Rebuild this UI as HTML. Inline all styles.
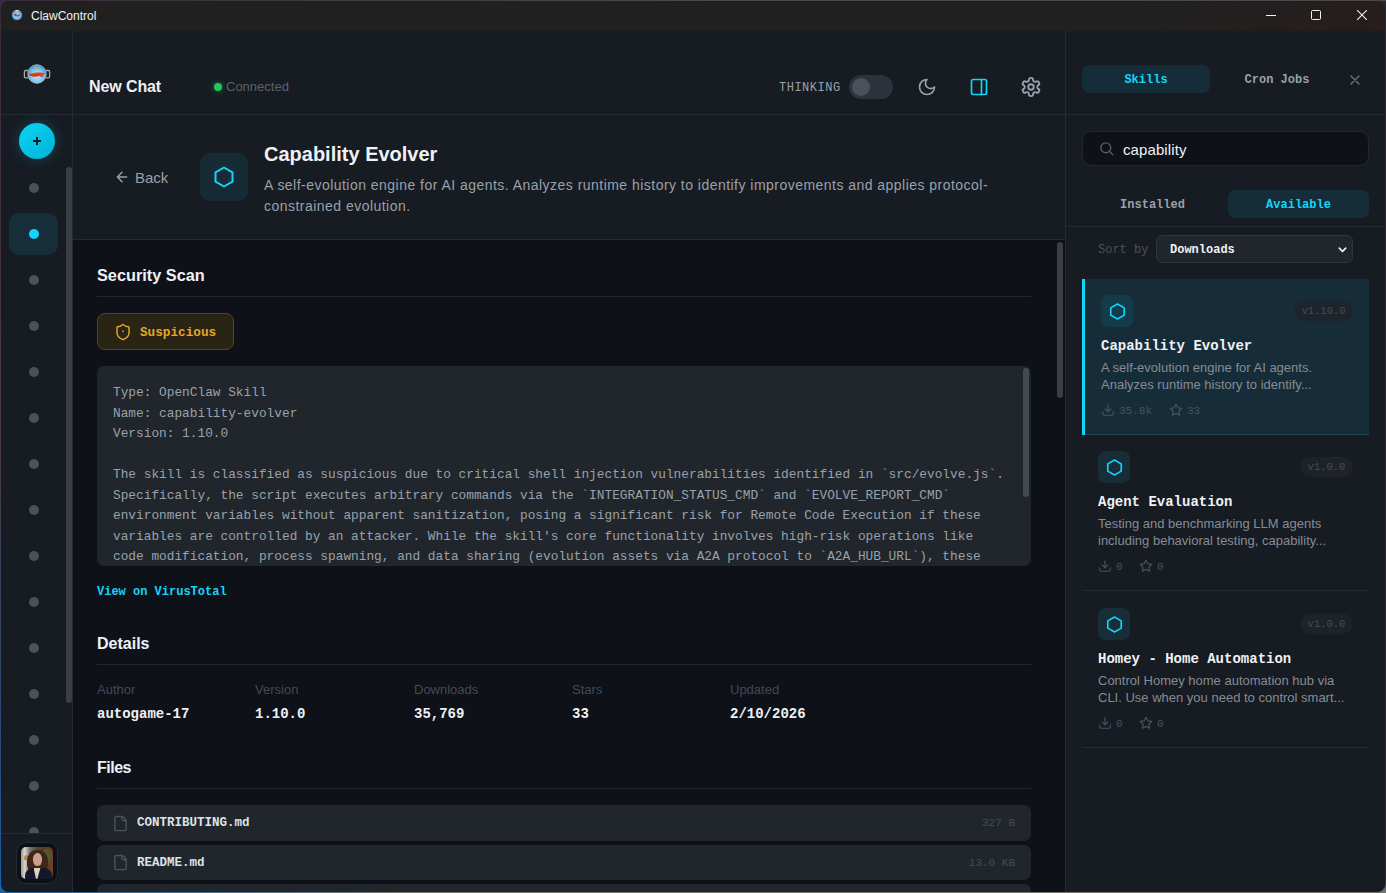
<!DOCTYPE html>
<html><head><meta charset="utf-8">
<style>
*{box-sizing:border-box;margin:0;padding:0}
html,body{width:1386px;height:893px;overflow:hidden;background:linear-gradient(180deg,#4a4a4a 0px,#4a4a4a 1px,#2a2a30 1px,#2a2a30 880px,#6f7a80 892px);font-family:"Liberation Sans",sans-serif}
.mono{font-family:"Liberation Mono",monospace}
.abs{position:absolute}
#win{position:absolute;left:1px;top:1px;width:1384px;height:891px;border-radius:8px;overflow:hidden;background:#171b22}
#title{position:absolute;left:0;top:0;width:1384px;height:30px;background:linear-gradient(90deg,#202020 0%,#202020 82%,#261d1c 100%)}
#title .t{position:absolute;left:30px;top:8px;font-size:12px;color:#f2f2f2}
#side{position:absolute;left:0;top:30px;width:72px;height:861px;background:#171b22;border-right:1px solid #262b33}
#hdr{position:absolute;left:72px;top:30px;width:992px;height:84px;background:#171b22;border-bottom:1px solid #262b33}
#skh{position:absolute;left:72px;top:114px;width:992px;height:125px;background:#171b22;border-bottom:1px solid #262b33}
#main{position:absolute;left:72px;top:239px;width:992px;height:652px;background:#0e1118;overflow:hidden}
#rp{position:absolute;left:1064px;top:30px;width:320px;height:861px;background:#171b22;box-shadow:inset 1px 0 0 #262b33}
</style></head>
<body>
<div style="position:absolute;left:0;top:0;width:700px;height:2px;background:linear-gradient(90deg,#3a2a3a,#4a4a4a)"></div>
<div style="position:absolute;left:0;top:0;width:2px;height:893px;background:linear-gradient(180deg,#3a2a3a 0%,#4a3a46 50%,#2a4a78 85%,#1d5fa8 100%)"></div>
<div style="position:absolute;left:0;top:891px;width:1386px;height:2px;background:linear-gradient(90deg,#1d5fa8 0%,#3d6a90 10%,#77766e 30%,#77766e 100%)"></div>
<div style="position:absolute;left:0;top:880px;width:12px;height:13px;background:#1d5fa8"></div>
<div style="position:absolute;left:0;top:0;width:12px;height:12px;background:#3a2a3a"></div>
<div id="win">
  <div id="title">
    <svg class="abs" style="left:9px;top:7px" width="14" height="14" viewBox="0 0 14 14"><circle cx="7" cy="7" r="5.5" fill="#4aa8e8" stroke="#222" stroke-width="0.8"/><circle cx="7" cy="7.5" r="3.8" fill="#7cc7f5"/><path d="M3.5 6.5 L6 5.5 L7 7.5 L10.5 6 L9 8.5 L5 8 Z" fill="#d8321a"/><rect x="5.5" y="2" width="3" height="1.5" fill="#e8d7a8"/></svg>
    <div class="t">ClawControl</div>
    <div class="abs" style="left:1265px;top:14px;width:10px;height:1px;background:#f2f2f2"></div>
    <div class="abs" style="left:1310px;top:9px;width:10px;height:10px;border:1px solid #f2f2f2;border-radius:1.5px"></div>
    <svg class="abs" style="left:1356px;top:9px" width="10" height="10" viewBox="0 0 10 10" stroke="#f2f2f2" stroke-width="1.1"><path d="M0 0L10 10M10 0L0 10"/></svg>
  </div>
  <div id="side">
    <div class="abs" style="left:0;top:83px;width:72px;height:1px;background:#262b33"></div>
    <svg id="logo" class="abs" style="left:21px;top:32px" width="30" height="22" viewBox="0 0 30 22">
      <defs><radialGradient id="lg" cx="50%" cy="60%" r="55%"><stop offset="0" stop-color="#c5ecff"/><stop offset="0.7" stop-color="#6cc6fa"/><stop offset="1" stop-color="#2f9be6"/></radialGradient></defs>
      <path d="M6.2 7.5 H3.6 Q2.4 7.5 2.4 8.8 V13.6 Q2.4 14.9 3.6 14.9 H6.2" fill="none" stroke="#a9a9a9" stroke-width="1.3"/>
      <path d="M23.8 7.5 H26.4 Q27.6 7.5 27.6 8.8 V13.6 Q27.6 14.9 26.4 14.9 H23.8" fill="none" stroke="#a9a9a9" stroke-width="1.3"/>
      <circle cx="15" cy="11" r="9.2" fill="url(#lg)" stroke="#b5b5b5" stroke-width="1"/>
      <path d="M12 4.2 L18 6 M12 6 L18 4.2" stroke="#c9a56a" stroke-width="1.3"/>
      <path d="M6.8 11.6 Q7.5 9.8 11 10.2 Q14 9 17.5 9.6 Q20 9.4 23.5 10.4 Q22.5 11.8 20 11.6 L22 13.6 Q19.5 14.8 17.5 13 Q14 14.2 10.5 13.4 Q7.5 13.2 6.8 11.6Z" fill="#e8401a"/><path d="M8 12.2 Q12 13.4 17 12" stroke="#b52a0e" stroke-width="0.5" fill="none"/>
    </svg>
    <div class="abs" style="left:18px;top:92px;width:36px;height:36px;border-radius:50%;background:linear-gradient(135deg,#0ad4f2,#01b2d5);box-shadow:0 0 14px rgba(6,182,212,.3)"></div>
    <div class="abs" style="left:32px;top:109px;width:8px;height:2px;background:#0a1c22"></div>
    <div class="abs" style="left:35px;top:106px;width:2px;height:8px;background:#0a1c22"></div>
    <div class="abs" style="left:65px;top:136px;width:6px;height:536px;border-radius:3px;background:#3a3f47"></div>
    <div class="abs" style="left:8px;top:182px;width:49px;height:42px;border-radius:10px;background:#152e39"></div>
<div class="abs" style="left:0;top:84px;width:65px;height:718px;overflow:hidden"><div class="abs" style="left:28px;top:68px;width:10px;height:10px;border-radius:50%;background:#4b5059"></div>
<div class="abs" style="left:28px;top:114px;width:10px;height:10px;border-radius:50%;background:#12d5f8"></div>
<div class="abs" style="left:28px;top:160px;width:10px;height:10px;border-radius:50%;background:#4b5059"></div>
<div class="abs" style="left:28px;top:206px;width:10px;height:10px;border-radius:50%;background:#4b5059"></div>
<div class="abs" style="left:28px;top:252px;width:10px;height:10px;border-radius:50%;background:#4b5059"></div>
<div class="abs" style="left:28px;top:298px;width:10px;height:10px;border-radius:50%;background:#4b5059"></div>
<div class="abs" style="left:28px;top:344px;width:10px;height:10px;border-radius:50%;background:#4b5059"></div>
<div class="abs" style="left:28px;top:390px;width:10px;height:10px;border-radius:50%;background:#4b5059"></div>
<div class="abs" style="left:28px;top:436px;width:10px;height:10px;border-radius:50%;background:#4b5059"></div>
<div class="abs" style="left:28px;top:482px;width:10px;height:10px;border-radius:50%;background:#4b5059"></div>
<div class="abs" style="left:28px;top:528px;width:10px;height:10px;border-radius:50%;background:#4b5059"></div>
<div class="abs" style="left:28px;top:574px;width:10px;height:10px;border-radius:50%;background:#4b5059"></div>
<div class="abs" style="left:28px;top:620px;width:10px;height:10px;border-radius:50%;background:#4b5059"></div>
<div class="abs" style="left:28px;top:666px;width:10px;height:10px;border-radius:50%;background:#4b5059"></div>
<div class="abs" style="left:28px;top:712px;width:10px;height:10px;border-radius:50%;background:#4b5059"></div>
</div>
<div class="abs" style="left:0;top:802px;width:72px;height:1px;background:#262b33"></div>
    <div class="abs" style="left:15.3px;top:811.3px;width:41.5px;height:41.5px;border-radius:10px;border:1.5px solid #262b33;background:#0c1017"></div>
    <div class="abs" style="left:20px;top:815.7px;width:32px;height:32.5px;border-radius:5px;overflow:hidden;background:linear-gradient(90deg,#9a9890 0%,#d8d6d0 12%,#7a746a 28%,#55483e 50%,#5e3a26 72%,#6e4028 100%)">
      <div class="abs" style="left:3px;top:8px;width:7px;height:5px;border-radius:50% 50% 0 0;background:#b89040"></div>
      <div class="abs" style="left:21px;top:2px;width:9px;height:14px;border-radius:40%;background:rgba(70,110,50,.55)"></div>
      <div class="abs" style="left:6px;top:3px;width:21px;height:24px;border-radius:45% 45% 40% 40%;background:#3e2618"></div>
      <div class="abs" style="left:12px;top:6px;width:9px;height:13px;border-radius:48% 48% 45% 45%;background:#caa08a"></div>
      <div class="abs" style="left:4px;top:21px;width:27px;height:13px;border-radius:8px 8px 0 0;background:#121829"></div>
      <div class="abs" style="left:12.5px;top:21px;width:7px;height:11px;background:#ddd2bc;clip-path:polygon(0 0,100% 0,55% 100%,35% 100%)"></div>
    </div>
  </div>
  <div id="hdr">
    <div class="abs" style="left:16px;top:47px;font-weight:bold;font-size:16px;color:#eef1f5;letter-spacing:-0.1px">New Chat</div>
    <div class="abs" style="left:141px;top:52px;width:8px;height:8px;border-radius:50%;background:#22c55e;box-shadow:0 0 6px rgba(34,197,94,.5)"></div>
    <div class="abs" style="left:153px;top:48px;font-size:13px;color:#5b626b">Connected</div>
    <div class="abs mono" style="left:706px;top:50px;font-size:12px;letter-spacing:0.5px;color:#9aa1aa">THINKING</div>
    <div class="abs" style="left:776px;top:44px;width:44px;height:24px;border-radius:12px;background:#2d333b">
      <div class="abs" style="left:3px;top:3px;width:18px;height:18px;border-radius:50%;background:#4b5159"></div>
    </div>
    <svg class="abs" style="left:844px;top:46px" width="20" height="20" viewBox="0 0 24 24" fill="none" stroke="#9aa1aa" stroke-width="2" stroke-linecap="round" stroke-linejoin="round"><path d="M12 3a6 6 0 0 0 9 9 9 9 0 1 1-9-9Z"/></svg>
    <svg class="abs" style="left:896px;top:46px" width="20" height="20" viewBox="0 0 24 24" fill="none" stroke="#12d5f8" stroke-width="2" stroke-linecap="round" stroke-linejoin="round"><rect x="3" y="3" width="18" height="18" rx="2"/><path d="M15 3v18"/></svg>
    <svg class="abs" style="left:947px;top:45px" width="22" height="22" viewBox="0 0 24 24" fill="none" stroke="#9aa1aa" stroke-width="2" stroke-linecap="round" stroke-linejoin="round"><path d="M12.22 2h-.44a2 2 0 0 0-2 2v.18a2 2 0 0 1-1 1.73l-.43.25a2 2 0 0 1-2 0l-.15-.08a2 2 0 0 0-2.73.73l-.22.38a2 2 0 0 0 .73 2.73l.15.1a2 2 0 0 1 1 1.72v.51a2 2 0 0 1-1 1.74l-.15.09a2 2 0 0 0-.73 2.73l.22.38a2 2 0 0 0 2.73.73l.15-.08a2 2 0 0 1 2 0l.43.25a2 2 0 0 1 1 1.73V20a2 2 0 0 0 2 2h.44a2 2 0 0 0 2-2v-.18a2 2 0 0 1 1-1.73l.43-.25a2 2 0 0 1 2 0l.15.08a2 2 0 0 0 2.73-.73l.22-.39a2 2 0 0 0-.73-2.73l-.15-.08a2 2 0 0 1-1-1.74v-.5a2 2 0 0 1 1-1.74l.15-.09a2 2 0 0 0 .73-2.73l-.22-.38a2 2 0 0 0-2.73-.73l-.15.08a2 2 0 0 1-2 0l-.43-.25a2 2 0 0 1-1-1.73V4a2 2 0 0 0-2-2z"/><circle cx="12" cy="12" r="3"/></svg>
  </div>
  <div id="skh">
    <svg class="abs" style="left:41px;top:54px" width="16" height="16" viewBox="0 0 24 24" fill="none" stroke="#9aa1aa" stroke-width="2.2" stroke-linecap="round" stroke-linejoin="round"><path d="M19 12H5M12 19l-7-7 7-7"/></svg>
    <div class="abs" style="left:62px;top:54px;font-size:15px;color:#9aa1aa">Back</div>
    <div class="abs" style="left:127px;top:38px;width:48px;height:48px;border-radius:10px;background:#162b35"></div>
    <svg class="abs" style="left:139px;top:50px" width="24" height="24" viewBox="0 0 24 24" fill="none" stroke="#12d5f8" stroke-width="2" stroke-linejoin="round"><path d="M12 2.5l8.5 4.9v9.2L12 21.5l-8.5-4.9V7.4z"/></svg>
    <div class="abs" style="left:191px;top:28px;font-weight:bold;font-size:20px;color:#eef1f5">Capability Evolver</div>
    <div class="abs" style="left:191px;top:60px;width:760px;font-size:14px;line-height:21px;color:#9aa1aa;letter-spacing:0.47px">A self-evolution engine for AI agents. Analyzes runtime history to identify improvements and applies protocol-<br>constrained evolution.</div>
  </div>
  <div id="main">
    <div class="abs" style="left:984px;top:2px;width:6px;height:156px;border-radius:3px;background:#3a3f47"></div>
    <div class="abs" style="left:24px;top:26px;font-weight:bold;font-size:16.3px;color:#eef1f5">Security Scan</div>
    <div class="abs" style="left:24px;top:56px;width:934px;height:1px;background:#21262d"></div>
    <div class="abs" style="left:24px;top:73px;width:137px;height:37px;border-radius:8px;background:#2a2415;border:1px solid #5a4716"></div>
    <svg class="abs" style="left:41px;top:83px" width="18" height="18" viewBox="0 0 24 24" fill="none" stroke="#e3a82a" stroke-width="1.9" stroke-linecap="round" stroke-linejoin="round"><path d="M20 13c0 5-3.5 7.5-7.66 8.95a1 1 0 0 1-.67-.01C7.5 20.5 4 18 4 13V6a1 1 0 0 1 1-1c2 0 4.5-1.2 6.24-2.72a1.17 1.17 0 0 1 1.52 0C14.51 3.81 17 5 19 5a1 1 0 0 1 1 1z"/><path d="M12 10.5v1"/></svg>
    <div class="abs mono" style="left:67px;top:85px;font-size:12.7px;font-weight:bold;color:#e3a82a">Suspicious</div>
    <div class="abs" style="left:24px;top:126px;width:934px;height:200px;border-radius:7px;background:#21262d;overflow:hidden">
      <pre class="mono" style="position:absolute;left:16px;top:17px;margin:0;font-family:'Liberation Mono',monospace;font-size:12.8px;line-height:20.5px;color:#9aa1aa">Type: OpenClaw Skill
Name: capability-evolver
Version: 1.10.0

The skill is classified as suspicious due to critical shell injection vulnerabilities identified in `src/evolve.js`.
Specifically, the script executes arbitrary commands via the `INTEGRATION_STATUS_CMD` and `EVOLVE_REPORT_CMD`
environment variables without apparent sanitization, posing a significant risk for Remote Code Execution if these
variables are controlled by an attacker. While the skill&#x27;s core functionality involves high-risk operations like
code modification, process spawning, and data sharing (evolution assets via A2A protocol to `A2A_HUB_URL`), these
vulnerabilities represent a significant security concern.</pre>
      <div class="abs" style="left:926px;top:2px;width:6px;height:129px;border-radius:3px;background:#444a52"></div>
    </div>
    <div class="abs mono" style="left:24px;top:345px;font-size:12px;font-weight:bold;color:#12d5f8">View on VirusTotal</div>
    <div class="abs" style="left:24px;top:395px;font-weight:bold;font-size:16px;color:#eef1f5">Details</div>
    <div class="abs" style="left:24px;top:424px;width:934px;height:1px;background:#21262d"></div>
    <div class="abs" style="left:24px;top:442px;font-size:13px;color:#434a52">Author</div><div class="abs mono" style="left:24px;top:466px;font-size:14px;font-weight:bold;color:#eef1f5">autogame-17</div><div class="abs" style="left:182px;top:442px;font-size:13px;color:#434a52">Version</div><div class="abs mono" style="left:182px;top:466px;font-size:14px;font-weight:bold;color:#eef1f5">1.10.0</div><div class="abs" style="left:341px;top:442px;font-size:13px;color:#434a52">Downloads</div><div class="abs mono" style="left:341px;top:466px;font-size:14px;font-weight:bold;color:#eef1f5">35,769</div><div class="abs" style="left:499px;top:442px;font-size:13px;color:#434a52">Stars</div><div class="abs mono" style="left:499px;top:466px;font-size:14px;font-weight:bold;color:#eef1f5">33</div><div class="abs" style="left:657px;top:442px;font-size:13px;color:#434a52">Updated</div><div class="abs mono" style="left:657px;top:466px;font-size:14px;font-weight:bold;color:#eef1f5">2/10/2026</div>
    <div class="abs" style="left:24px;top:519px;font-weight:bold;font-size:16px;letter-spacing:-0.5px;color:#eef1f5">Files</div>
    <div class="abs" style="left:24px;top:548px;width:934px;height:1px;background:#21262d"></div>
    <div class="abs" style="left:24px;top:565px;width:934px;height:35.5px;border-radius:7px;background:#21262d"><svg class="abs" style="left:15.2px;top:9.5px" width="17" height="17" viewBox="0 0 24 24" fill="none" stroke="#4b525b" stroke-width="2" stroke-linecap="round" stroke-linejoin="round"><path d="M15 2H6a2 2 0 0 0-2 2v16a2 2 0 0 0 2 2h12a2 2 0 0 0 2-2V7Z"/><path d="M14 2v4a2 2 0 0 0 2 2h4"/></svg><div class="abs mono" style="left:40px;top:11px;font-size:12.5px;font-weight:bold;color:#dfe3e8">CONTRIBUTING.md</div><div class="abs mono" style="right:16px;top:12px;font-size:11px;color:#454c55">327 B</div></div><div class="abs" style="left:24px;top:604.5px;width:934px;height:35.5px;border-radius:7px;background:#21262d"><svg class="abs" style="left:15.2px;top:9.5px" width="17" height="17" viewBox="0 0 24 24" fill="none" stroke="#4b525b" stroke-width="2" stroke-linecap="round" stroke-linejoin="round"><path d="M15 2H6a2 2 0 0 0-2 2v16a2 2 0 0 0 2 2h12a2 2 0 0 0 2-2V7Z"/><path d="M14 2v4a2 2 0 0 0 2 2h4"/></svg><div class="abs mono" style="left:40px;top:11px;font-size:12.5px;font-weight:bold;color:#dfe3e8">README.md</div><div class="abs mono" style="right:16px;top:12px;font-size:11px;color:#454c55">13.0 KB</div></div><div class="abs" style="left:24px;top:644px;width:934px;height:35.5px;border-radius:7px;background:#21262d"><svg class="abs" style="left:15.2px;top:9.5px" width="17" height="17" viewBox="0 0 24 24" fill="none" stroke="#4b525b" stroke-width="2" stroke-linecap="round" stroke-linejoin="round"><path d="M15 2H6a2 2 0 0 0-2 2v16a2 2 0 0 0 2 2h12a2 2 0 0 0 2-2V7Z"/><path d="M14 2v4a2 2 0 0 0 2 2h4"/></svg><div class="abs mono" style="left:40px;top:11px;font-size:12.5px;font-weight:bold;color:#dfe3e8">SKILL.md</div><div class="abs mono" style="right:16px;top:12px;font-size:11px;color:#454c55">4.1 KB</div></div>
  </div>
  <div id="rp">
    <div class="abs" style="left:17px;top:34px;width:128px;height:28px;border-radius:7px;background:#152d39"></div>
    <div class="abs mono" style="left:17px;top:42px;width:128px;text-align:center;font-size:12px;font-weight:bold;color:#12d5f8">Skills</div>
    <div class="abs mono" style="left:148px;top:42px;width:128px;text-align:center;font-size:12px;font-weight:bold;color:#9aa1aa">Cron Jobs</div>
    <svg class="abs" style="left:285px;top:44px" width="10" height="10" viewBox="0 0 10 10" stroke="#6b727b" stroke-width="1.4" stroke-linecap="round"><path d="M1 1l8 8M9 1l-8 8"/></svg>
    <div class="abs" style="left:0;top:83px;width:320px;height:1px;background:#262b33"></div>
    <div class="abs" style="left:17px;top:100px;width:287px;height:35px;border-radius:9px;background:#0e1118;border:1px solid #232830"></div>
    <svg class="abs" style="left:32.5px;top:108.5px" width="17" height="17" viewBox="0 0 24 24" fill="none" stroke="#555c64" stroke-width="1.9" stroke-linecap="round"><circle cx="11" cy="11" r="7"/><path d="M21 21l-4.3-4.3"/></svg>
    <div class="abs" style="left:58px;top:110px;font-size:15px;letter-spacing:0.1px;color:#eef1f5">capability</div>
    <div class="abs mono" style="left:17px;top:167px;width:141px;text-align:center;font-size:12px;font-weight:bold;color:#9aa1aa">Installed</div>
    <div class="abs" style="left:163px;top:159px;width:141px;height:28px;border-radius:7px;background:#152d39"></div>
    <div class="abs mono" style="left:163px;top:167px;width:141px;text-align:center;font-size:12px;font-weight:bold;color:#12d5f8">Available</div>
    <div class="abs" style="left:0;top:195px;width:320px;height:1px;background:#262b33"></div>
    <div class="abs mono" style="left:33px;top:212px;font-size:12px;color:#4b525b">Sort by</div>
    <div class="abs" style="left:91px;top:204px;width:197px;height:28px;border-radius:6px;background:#21262d;border:1px solid #2f353d"></div>
    <div class="abs mono" style="left:105px;top:212px;font-size:12px;font-weight:bold;color:#eef1f5">Downloads</div>
    <svg class="abs" style="left:272px;top:213px" width="11" height="11" viewBox="0 0 24 24" fill="none" stroke="#eef1f5" stroke-width="3.5" stroke-linecap="round" stroke-linejoin="round"><path d="M5 9l7 7 7-7"/></svg>
    <div class="abs" style="left:17px;top:248px;width:287px;height:156px;background:#162c38;border-bottom:1px solid #1f4453"><div class="abs" style="left:0;top:0;width:3px;height:156px;background:#12d5f8"></div><div class="abs" style="left:19px;top:16px;width:32px;height:32px;border-radius:7px;background:#123c4a"></div><svg class="abs" style="left:25.5px;top:22.5px" width="19" height="19" viewBox="0 0 24 24" fill="none" stroke="#12d5f8" stroke-width="2.1" stroke-linejoin="round"><path d="M12 2.5l8.5 4.9v9.2L12 21.5l-8.5-4.9V7.4z"/></svg><div class="abs mono" style="left:212px;top:22px;width:59px;height:20px;border-radius:10px;background:#1e242b;font-size:10.5px;line-height:20px;text-align:center;color:#454c55">v1.10.0</div><div class="abs mono" style="left:19px;top:58.5px;font-size:14px;font-weight:bold;color:#eef1f5">Capability Evolver</div><div class="abs" style="left:19px;top:80px;font-size:13px;line-height:17px;color:#858c95">A self-evolution engine for AI agents.<br>Analyzes runtime history to identify...</div><svg class="abs" style="left:19px;top:124px" width="14" height="14" viewBox="0 0 24 24" fill="none" stroke="#4b525b" stroke-width="2" stroke-linecap="round" stroke-linejoin="round"><path d="M21 15v4a2 2 0 0 1-2 2H5a2 2 0 0 1-2-2v-4"/><path d="M7 10l5 5 5-5"/><path d="M12 15V3"/></svg><div class="abs mono" style="left:37px;top:125.5px;font-size:11px;color:#4b525b">35.8k</div><svg class="abs" style="left:87px;top:124px" width="14" height="14" viewBox="0 0 24 24" fill="none" stroke="#4b525b" stroke-width="2" stroke-linecap="round" stroke-linejoin="round"><path d="M12 2l3.09 6.26L22 9.27l-5 4.87 1.18 6.88L12 17.77l-6.18 3.25L7 14.14 2 9.27l6.91-1.01z"/></svg><div class="abs mono" style="left:105px;top:125.5px;font-size:11px;color:#4b525b">33</div></div><div class="abs" style="left:17px;top:404px;width:287px;height:156px;background:transparent;border-bottom:1px solid #262b33"><div class="abs" style="left:16px;top:16px;width:32px;height:32px;border-radius:7px;background:#172d38"></div><svg class="abs" style="left:22.5px;top:22.5px" width="19" height="19" viewBox="0 0 24 24" fill="none" stroke="#12d5f8" stroke-width="2.1" stroke-linejoin="round"><path d="M12 2.5l8.5 4.9v9.2L12 21.5l-8.5-4.9V7.4z"/></svg><div class="abs mono" style="left:218px;top:22px;width:53px;height:20px;border-radius:10px;background:#1e232a;font-size:10.5px;line-height:20px;text-align:center;color:#454c55">v1.0.0</div><div class="abs mono" style="left:16px;top:58.5px;font-size:14px;font-weight:bold;color:#eef1f5">Agent Evaluation</div><div class="abs" style="left:16px;top:80px;font-size:13px;line-height:17px;color:#858c95">Testing and benchmarking LLM agents<br>including behavioral testing, capability...</div><svg class="abs" style="left:16px;top:124px" width="14" height="14" viewBox="0 0 24 24" fill="none" stroke="#4b525b" stroke-width="2" stroke-linecap="round" stroke-linejoin="round"><path d="M21 15v4a2 2 0 0 1-2 2H5a2 2 0 0 1-2-2v-4"/><path d="M7 10l5 5 5-5"/><path d="M12 15V3"/></svg><div class="abs mono" style="left:34px;top:125.5px;font-size:11px;color:#4b525b">0</div><svg class="abs" style="left:57px;top:124px" width="14" height="14" viewBox="0 0 24 24" fill="none" stroke="#4b525b" stroke-width="2" stroke-linecap="round" stroke-linejoin="round"><path d="M12 2l3.09 6.26L22 9.27l-5 4.87 1.18 6.88L12 17.77l-6.18 3.25L7 14.14 2 9.27l6.91-1.01z"/></svg><div class="abs mono" style="left:75px;top:125.5px;font-size:11px;color:#4b525b">0</div></div><div class="abs" style="left:17px;top:561px;width:287px;height:156px;background:transparent;border-bottom:1px solid #262b33"><div class="abs" style="left:16px;top:16px;width:32px;height:32px;border-radius:7px;background:#172d38"></div><svg class="abs" style="left:22.5px;top:22.5px" width="19" height="19" viewBox="0 0 24 24" fill="none" stroke="#12d5f8" stroke-width="2.1" stroke-linejoin="round"><path d="M12 2.5l8.5 4.9v9.2L12 21.5l-8.5-4.9V7.4z"/></svg><div class="abs mono" style="left:218px;top:22px;width:53px;height:20px;border-radius:10px;background:#1e232a;font-size:10.5px;line-height:20px;text-align:center;color:#454c55">v1.0.0</div><div class="abs mono" style="left:16px;top:58.5px;font-size:14px;font-weight:bold;color:#eef1f5">Homey - Home Automation</div><div class="abs" style="left:16px;top:80px;font-size:13px;line-height:17px;color:#858c95">Control Homey home automation hub via<br>CLI. Use when you need to control smart...</div><svg class="abs" style="left:16px;top:124px" width="14" height="14" viewBox="0 0 24 24" fill="none" stroke="#4b525b" stroke-width="2" stroke-linecap="round" stroke-linejoin="round"><path d="M21 15v4a2 2 0 0 1-2 2H5a2 2 0 0 1-2-2v-4"/><path d="M7 10l5 5 5-5"/><path d="M12 15V3"/></svg><div class="abs mono" style="left:34px;top:125.5px;font-size:11px;color:#4b525b">0</div><svg class="abs" style="left:57px;top:124px" width="14" height="14" viewBox="0 0 24 24" fill="none" stroke="#4b525b" stroke-width="2" stroke-linecap="round" stroke-linejoin="round"><path d="M12 2l3.09 6.26L22 9.27l-5 4.87 1.18 6.88L12 17.77l-6.18 3.25L7 14.14 2 9.27l6.91-1.01z"/></svg><div class="abs mono" style="left:75px;top:125.5px;font-size:11px;color:#4b525b">0</div></div>
  </div>
</div>
</body></html>
